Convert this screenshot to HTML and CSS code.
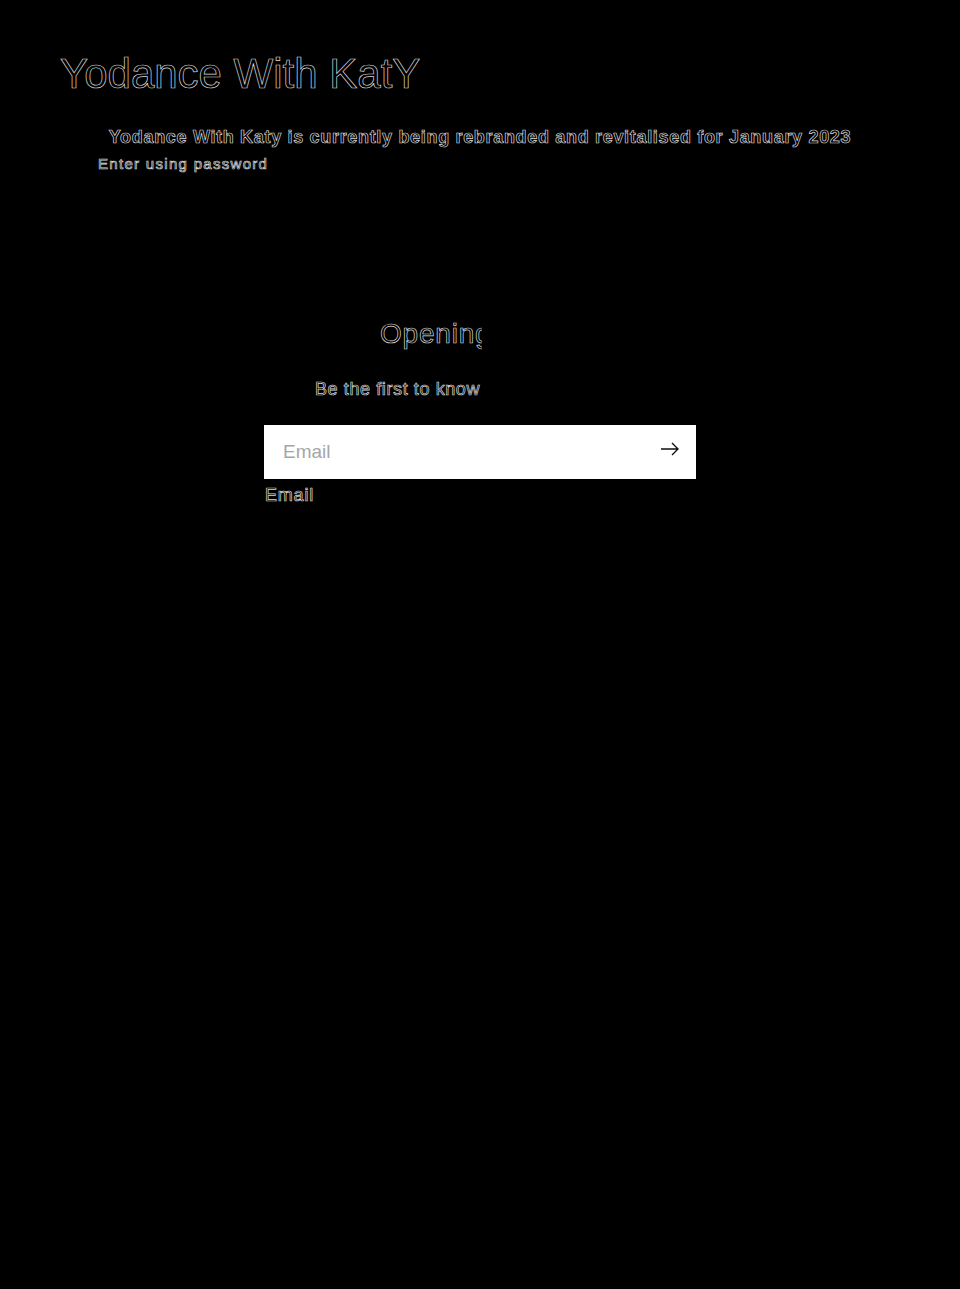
FILE: index.html
```html
<!DOCTYPE html>
<html lang="en">
<head>
<meta charset="utf-8">
<title>Yodance With KatY</title>
<link rel="stylesheet" href="styles.css">
</head>
<body>
<header class="header">
  <h1 class="brand outline">Yodance With KatY</h1>
</header>
<section class="notice">
  <p class="message outline">Yodance With Katy is currently being rebranded and revitalised for January 2023</p>
  <p class="enter outline">Enter using password</p>
</section>
<main class="signup">
  <div class="clip">
    <h2 class="heading outline">Opening soon</h2>
    <p class="sub outline">Be the first to know when we launch.</p>
  </div>
  <form class="form">
    <div class="field">
      <input class="input" type="email" placeholder="Email">
      <span class="arrow"><svg width="20" height="14" viewBox="0 0 20 14" fill="none" stroke="#111" stroke-width="1.4"><path d="M1 7h17M12 1l6 6-6 6"/></svg></span>
    </div>
    <label class="label outline">Email</label>
  </form>
</main>
</body>
</html>
```
FILE: styles.css
```css
html, body {
  margin: 0;
  background: #000;
  height: 100%;
}
body {
  font-family: "Liberation Sans", Arial, sans-serif;
  color: #000;
}
.outline {
  color: #000;
  -webkit-text-stroke: 0.7px #d8d8d8;
}
.header {
  padding: 52px 0 0 60px;
}
.brand {
  margin: 0;
  font-size: 42px;
  font-weight: 400;
  line-height: 44px;
}
.notice {
  padding-top: 29px;
}
.message {
  margin: 0;
  text-align: center;
  font-size: 18px;
  font-weight: 700;
  line-height: 24px;
  letter-spacing: 0.68px;
}
.enter {
  margin: 5px 0 0 98px;
  font-size: 15px;
  line-height: 20px;
  letter-spacing: 1.3px;
}
.signup {
  display: flex;
  flex-direction: column;
  align-items: center;
  padding-top: 144px;
}
.clip {
  width: 482px;
  overflow: hidden;
  align-self: flex-start;
  display: flex;
  flex-direction: column;
}
.heading {
  margin: 0 0 0 380px;
  font-size: 28px;
  font-weight: 400;
  line-height: 32px;
  white-space: nowrap;
  letter-spacing: 0.8px;
}
.sub {
  margin: 27px 0 0 315px;
  font-size: 18px;
  line-height: 24px;
  white-space: nowrap;
  letter-spacing: 0.6px;
}
.form {
  margin-top: 24px;
  width: 432px;
  display: flex;
  flex-direction: column;
}
.field {
  position: relative;
  height: 54px;
  background: #fff;
}
.input {
  box-sizing: border-box;
  width: 100%;
  height: 54px;
  border: 0;
  outline: none;
  padding: 0 50px 0 19px;
  font-family: "Liberation Sans", Arial, sans-serif;
  font-size: 19px;
  background: #fff;
  color: #111;
}
.input::placeholder {
  color: #a6a6a6;
}
.arrow {
  position: absolute;
  right: 16px;
  top: 17px;
  line-height: 0;
}
.label {
  margin: 4px 0 0 1px;
  font-size: 18px;
  line-height: 24px;
  letter-spacing: 0.8px;
}
```
